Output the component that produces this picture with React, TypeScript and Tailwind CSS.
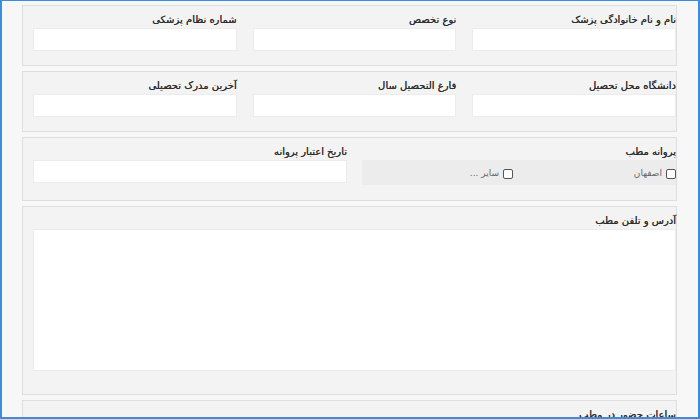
const font = { fontFamily: '"DejaVu Sans", Tahoma, sans-serif' };

function Label({ children }: { children: React.ReactNode }) {
    return (
        <div className="h-[14px] leading-[14px] text-[10px] text-[#2e2e2e] whitespace-nowrap mb-[1px] [text-shadow:0_0_0.4px_#2e2e2e]">
            {children}
        </div>
    );
}

function Field({ label }: { label: string }) {
    return (
        <div className="flex flex-col">
            <Label>{label}</Label>
            <div className="h-[23px] bg-white border border-[#ececec]" />
        </div>
    );
}

function Box({ children, className = '' }: { children: React.ReactNode; className?: string }) {
    return (
        <div className={`border border-[#dedede] bg-[#f3f3f3] pt-[7px] pl-[10px] pr-0 ${className}`}>
            {children}
        </div>
    );
}

function Check({ label }: { label: string }) {
    return (
        <label className="flex items-center gap-[4px] text-[9px] text-[#666]">
            <span className="w-[10px] h-[10px] border border-[#555] rounded-[2px] bg-white" />
            <span>{label}</span>
        </label>
    );
}

export default function App() {
    return (
        <div
            dir="rtl"
            style={font}
            className="w-[700px] h-[419px] overflow-hidden border-2 border-t-[1px] border-[#3a8edb] bg-[#f7f7f7] pt-[4px] pr-[21px] pl-[20px] flex flex-col gap-[5px]"
        >
            <Box className="pb-[14px]">
                <div className="grid grid-cols-3 gap-x-[16px]">
                    <Field label="نام و نام خانوادگی پزشک" />
                    <Field label="نوع تخصص" />
                    <Field label="شماره نظام پزشکی" />
                </div>
            </Box>

            <Box className="pb-[14px]">
                <div className="grid grid-cols-3 gap-x-[16px]">
                    <Field label="دانشگاه محل تحصیل" />
                    <Field label="فارغ التحصیل سال" />
                    <Field label="آخرین مدرک تحصیلی" />
                </div>
            </Box>

            <Box className="pb-[15px]">
                <div className="grid grid-cols-2 gap-x-[15px]">
                    <div className="flex flex-col">
                        <Label>پروانه مطب</Label>
                        <div className="h-[25px] bg-[#ececec] grid grid-cols-2 items-center pt-[2px]">
                            <Check label="اصفهان" />
                            <div className="pr-[6px]">
                                <Check label="سایر ..." />
                            </div>
                        </div>
                    </div>
                    <div className="flex flex-col">
                        <Label>تاریخ اعتبار پروانه</Label>
                        <div className="h-[23px] bg-white border border-[#ececec]" />
                    </div>
                </div>
            </Box>

            <Box className="pb-[23px]">
                <Label>آدرس و تلفن مطب</Label>
                <div className="h-[142px] bg-white border border-[#ececec]" />
            </Box>

            <Box className="pb-[14px]">
                <Label>ساعات حضور در مطب</Label>
                <div className="h-[23px] bg-white border border-[#ececec]" />
            </Box>
        </div>
    );
}
